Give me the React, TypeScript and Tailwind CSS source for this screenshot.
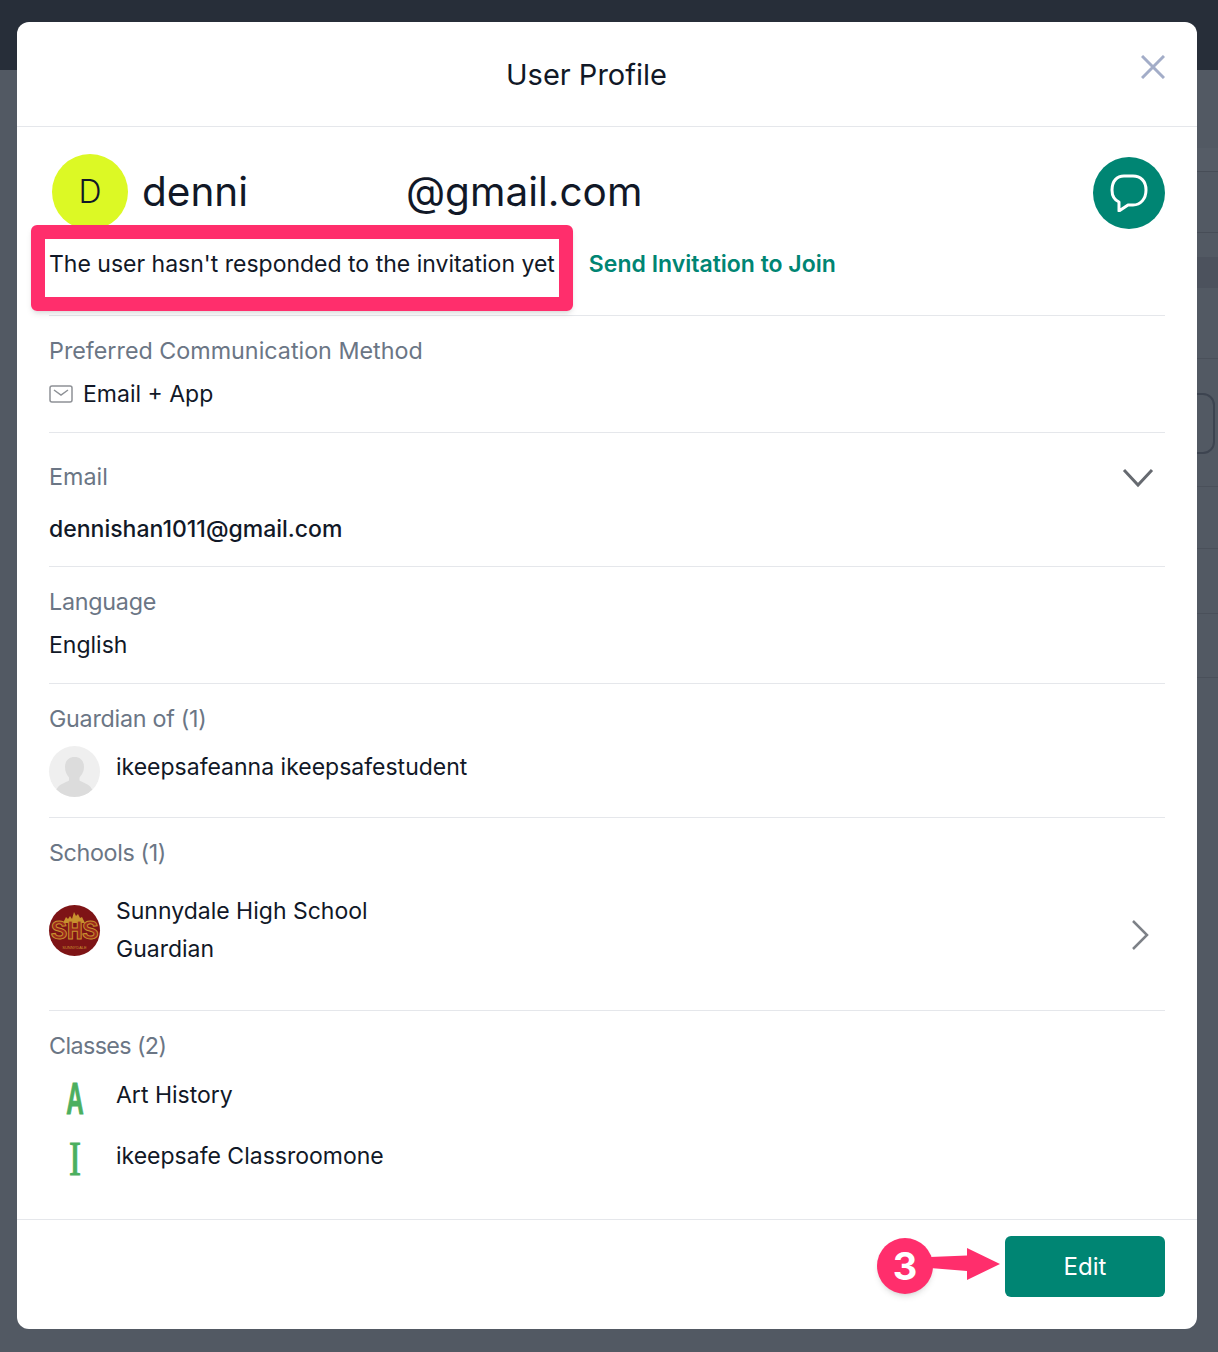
const FONT = "font-['Inter',sans-serif]";

const BACKDROP_ROWS = [
  { key: 'a', className: 'h-[78px]' },
  { key: 'b', className: 'h-[24px] bg-[#555c66] border-b border-[#474d57]' },
  { key: 'c', className: 'h-[61px] border-b border-[#474d57]' },
  { key: 'd', className: 'h-[24px]' },
  { key: 'e', className: 'h-[31px] bg-[#4c525d]' },
  { key: 'f', className: 'h-[71px] border-b border-[#4a505a]' },
  { key: 'g', className: 'h-[128px] border-b border-[#4a505a]' },
  { key: 'h', className: 'h-[62px] border-b border-[#4a505a]' },
  { key: 'i', className: 'h-[65px] border-b border-[#4a505a]' },
  { key: 'j', className: 'h-[64px] border-b border-[#4a505a]' },
];

function Label({ children }: { children: React.ReactNode }) {
  return <div className="text-[23.3px] leading-[36px] text-[#6b7685]">{children}</div>;
}

export default function App() {
  return (
    <div className={`relative h-[1352px] w-[1218px] overflow-hidden bg-[#525963] ${FONT} text-[#111827]`}>
      <div className="h-[70px] bg-[#272e39]" />
      <div className="ml-auto w-[21px]">
        {BACKDROP_ROWS.map((row) => (
          <div key={row.key} className={row.className} />
        ))}
      </div>
      <div className="absolute left-[1180px] top-[393px] h-[61px] w-[35px] rounded-[12px] border-2 border-[#3d4450]" />

      <div className="absolute left-[17px] top-[22px] flex h-[1307px] w-[1180px] flex-col rounded-[12px] bg-white">
        <div className="relative h-[105px] shrink-0 border-b border-[#e5e7eb] pl-[489px] pt-[34px] text-[29px] leading-[38px]">
          User Profile
          <svg className="absolute left-[1124px] top-[33px]" width="24" height="24" viewBox="0 0 24 24" fill="none" stroke="#a3adc8" strokeWidth="3">
            <path d="M1 1 23 23M23 1 1 23" />
          </svg>
        </div>
        <div className="flex-1 px-[32px]">
          <div className="flex h-[102px] items-center pl-[3px] pt-[28px]">
            <div className="flex h-[76px] w-[76px] items-center justify-center rounded-full bg-[#dcf925] text-[32px] font-light">D</div>
            <div className="ml-[14px] w-[264px] text-[40.500px]">denni</div>
            <div className="text-[40.500px]">@gmail.com</div>
            <div className="ml-auto mt-[2px] flex h-[72px] w-[72px] items-center justify-center rounded-full bg-[#008573]">
              <svg width="38" height="38" viewBox="0 0 38 38" fill="none" stroke="white" strokeWidth="3" strokeLinejoin="round">
                <path d="M14 2h9c7.500 0 13 5 13 14S30.500 31 23 31h-5l-9 6v-9C4.500 26 2 21 2 16 2 7 7 2 14 2Z" />
              </svg>
            </div>
          </div>
          <div className="flex h-[87px] items-start gap-[34px] border-b border-[#e5e7eb] pt-[17px] text-[23px] leading-[36px]">
            <span>The user hasn't responded to the invitation yet</span>
            <span className="font-semibold text-[#008573]">Send Invitation to Join</span>
          </div>
          <div className="h-[117px] border-b border-[#e5e7eb] pt-[17px]">
            <Label>Preferred Communication Method</Label>
            <div className="mt-[7px] flex items-center gap-[10px] text-[23px] leading-[36px]">
              <svg width="24" height="18" viewBox="0 0 24 18" fill="none" stroke="#8e9196" strokeWidth="1.500">
                <rect x="1" y="1" width="22" height="16" rx="2" />
                <path d="M5 5l7 5 7-5" />
              </svg>
              Email + App
            </div>
          </div>
          <div className="relative h-[134px] border-b border-[#e5e7eb] pt-[26px]">
            <Label>Email</Label>
            <div className="mt-[16px] text-[23px] font-medium leading-[36px]">dennishan1011@gmail.com</div>
            <svg className="absolute right-[11px] top-[35px]" width="32" height="20" viewBox="0 0 32 20" fill="none" stroke="#666a70" strokeWidth="3">
              <path d="M2 2l14 15L30 2" />
            </svg>
          </div>
          <div className="h-[117px] border-b border-[#e5e7eb] pt-[17px]">
            <Label><span className="tracking-[-0.25px]">Language</span></Label>
            <div className="mt-[7px] text-[23px] leading-[36px]">English</div>
          </div>
          <div className="h-[134px] border-b border-[#e5e7eb] pt-[17px]">
            <Label><span className="tracking-[-0.27px]">Guardian of (1)</span></Label>
            <div className="mt-[9px] flex items-center gap-[16px] text-[23px]">
              <div className="h-[51px] w-[51px] overflow-hidden rounded-full bg-[#efefef]">
                <svg width="51" height="51" viewBox="0 0 51 51" fill="#dcdcdc">
                  <path d="M25.500 11c6 0 9.500 4 9.500 10 0 5-2.500 8-4.500 10.500v3c3 2 8 3 11 6.500l2 3-8 7H15l-8-7 2-3c3-3.500 8-4.500 11-6.500v-3C18 29 16 26 16 21c0-6 3.500-10 9.500-10Z" />
                </svg>
              </div>
              <span className="pb-[9px]">ikeepsafeanna ikeepsafestudent</span>
            </div>
          </div>
          <div className="relative h-[193px] border-b border-[#e5e7eb] pt-[17px]">
            <Label><span className="tracking-[-0.36px]">Schools (1)</span></Label>
            <div className="mt-[21px] flex items-center gap-[16px]">
              <div className="relative flex h-[51px] w-[51px] items-center justify-center overflow-hidden rounded-full bg-[#7e1416]">
                <svg className="absolute left-[12px] top-[6px]" width="27" height="12" viewBox="0 0 27 12" fill="#c8912e">
                  <path d="M2 12 5 6l2 2 2-3 2 3 2-7 2 4 2-2 2 4 2-1 3 6Z" />
                </svg>
                <span className="relative mt-[3px] font-['Liberation_Mono',monospace] text-[27px] font-bold leading-[16px] tracking-[-0.5px] text-[#9c2a1c] [-webkit-text-stroke:1px_#c8912e]">SHS</span>
                <span className="absolute bottom-[6px] left-0 w-full whitespace-nowrap text-center font-['Liberation_Sans',sans-serif] text-[4px] leading-[4px] text-[#c8912e]">SUNNYDALE</span>
              </div>
              <div className="text-[23px] leading-[38px]">
                <div>Sunnydale High School</div>
                <div>Guardian</div>
              </div>
            </div>
            <svg className="absolute right-[15px] top-[101px]" width="20" height="32" viewBox="0 0 20 32" fill="none" stroke="#7d8187" strokeWidth="2.500">
              <path d="M3 2l14 14L3 30" />
            </svg>
          </div>
          <div className="pt-[17px]">
            <Label><span className="tracking-[-0.6px]">Classes (2)</span></Label>
            <div className="mt-[9px] flex h-[44px] items-center gap-[16px] text-[23px]">
              <div className="flex w-[51px] justify-center pt-[8px] font-['Liberation_Sans',sans-serif] text-[44px] font-bold leading-[44px] text-[#4caf5f]">
                <span className="scale-x-[0.55] [-webkit-text-stroke:1px_#4caf5f]">A</span>
              </div>
              Art History
            </div>
            <div className="mt-[17px] flex h-[44px] items-center gap-[16px] text-[23px]">
              <div className="flex w-[51px] justify-center pt-[6px] font-['Liberation_Serif',serif] text-[48px] leading-[44px] text-[#4caf5f]">
                <span className="scale-x-[0.75] [-webkit-text-stroke:1px_#4caf5f]">I</span>
              </div>
              ikeepsafe Classroomone
            </div>
          </div>
        </div>
        <div className="flex h-[110px] shrink-0 items-start justify-end border-t border-[#e5e7eb] px-[32px] pt-[16px]">
          <button className="flex h-[61px] w-[160px] items-center justify-center rounded-[6px] bg-[#008573] text-[24px] text-white">Edit</button>
        </div>
      </div>

      {/* annotation overlays */}
      <div className="absolute left-[31px] top-[225px] h-[86px] w-[542px] rounded-[6px] border-[14px] border-[#ff2e6c] shadow-md" />
      <div className="absolute left-[877px] top-[1238px] flex h-[56px] w-[56px] items-center justify-center rounded-full bg-[#ff2e6c] text-[38px] font-bold text-white shadow-md">3</div>
      <svg className="absolute left-[930px] top-[1246px]" width="72" height="40" viewBox="0 0 72 40" fill="#ff2e6c">
        <path d="M0 11 37 9.500V2l33 16-33 16v-9L0 22Z" />
      </svg>
    </div>
  );
}
